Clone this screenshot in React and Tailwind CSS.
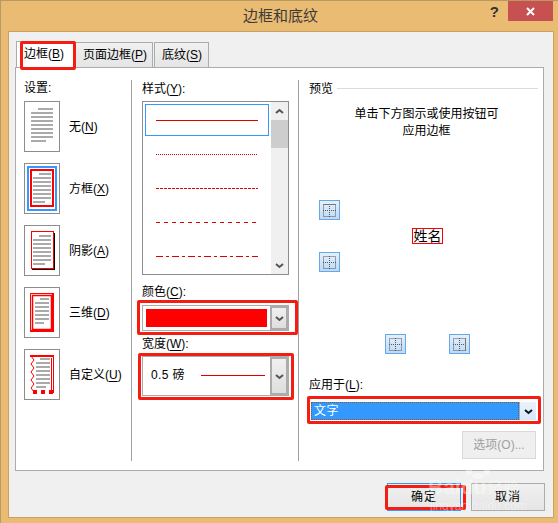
import React from "react";

const FONT = "font-['Liberation_Sans','Noto_Sans_CJK_SC',sans-serif]";

const docLines = (x1, x2, y, lastX2, firstX1, count = 9) => {
  const rows = [];
  for (let i = 0; i < count; i++) {
    const left = i === 0 ? firstX1 : x1;
    const right = i === count - 1 ? lastX2 : x2;
    rows.push(<rect key={i} x={left} y={y + i * 4} width={right - left} height="2" fill="#aaaaaa" />);
  }
  return rows;
};

const SettingNone = () => (
  <svg width="34" height="49" viewBox="0 0 34 49">{docLines(6, 28, 6, 21, 13)}</svg>
);

const SettingBox = () => (
  <svg width="34" height="49" viewBox="0 0 34 49">
    <rect x="3" y="3" width="28" height="43" fill="none" stroke="#3399ff" strokeWidth="2" />
    <rect x="6" y="6" width="22" height="36" fill="none" stroke="#ff0000" strokeWidth="2" />
    {docLines(8, 26, 9, 20, 14, 8)}
  </svg>
);

const SettingShadow = () => (
  <svg width="34" height="49" viewBox="0 0 34 49">
    <rect x="7" y="7" width="23" height="37" fill="#000" />
    <rect x="6.5" y="5.5" width="22" height="37" fill="#fff" stroke="#ff0000" />
    {docLines(8, 26, 9, 20, 14, 8)}
  </svg>
);

const Setting3d = () => (
  <svg width="34" height="49" viewBox="0 0 34 49">
    <rect x="5.5" y="5.5" width="23" height="38" fill="none" stroke="#ff0000" />
    <rect x="7.5" y="7.5" width="19" height="34" fill="none" stroke="#ff0000" strokeWidth="1.5" />
    <rect x="27" y="6" width="2" height="38" fill="#ff0000" />
    <rect x="6" y="42" width="23" height="2" fill="#ff0000" />
    {docLines(10, 24, 10, 19, 15, 7)}
  </svg>
);

const SettingCustom = () => (
  <svg width="34" height="49" viewBox="0 0 34 49">
    <rect x="5" y="5" width="23" height="2" fill="#ff0000" />
    <path d="M6 6 L9 10 L6 14 L9 18 L6 22 L9 26 L6 30 L9 34 L6 38 L9 42" fill="none" stroke="#ff0000" />
    <rect x="28" y="5" width="1" height="38" fill="#ff0000" />
    <rect x="26" y="8" width="1" height="32" fill="#ff0000" />
    <rect x="8" y="40" width="4" height="4" fill="#ff0000" />
    <rect x="16" y="40" width="4" height="4" fill="#ff0000" />
    <rect x="24" y="40" width="4" height="4" fill="#ff0000" />
    {docLines(11, 25, 8, 21, 15, 8)}
  </svg>
);

const settings = [
  { label: "无", key: "N", Icon: SettingNone },
  { label: "方框", key: "X", Icon: SettingBox },
  { label: "阴影", key: "A", Icon: SettingShadow },
  { label: "三维", key: "D", Icon: Setting3d },
  { label: "自定义", key: "U", Icon: SettingCustom },
];

const Hot = ({ children }) => <span className="underline underline-offset-2">{children}</span>;

const Chevron = ({ color = "#555555", up = false }) => (
  <svg width="9" height="7" viewBox="0 0 9 7">
    <path d={up ? "M1 5 L4.5 2 L8 5" : "M1 2 L4.5 5 L8 2"} fill="none" stroke={color} strokeWidth="2" />
  </svg>
);

const lineSamples = ["solid", "dotted", "dashed", "long", "dashdot"];

const LineSample = ({ kind }) => {
  const dash = { solid: "none", dotted: "1 1", dashed: "3 1", long: "4 4", dashdot: "7 3 3 3" }[kind];
  return (
    <svg width="102" height="1" viewBox="0 0 102 1" className="block">
      <line x1="0" y1="0.5" x2="102" y2="0.5" stroke="#e00000" strokeDasharray={dash} />
    </svg>
  );
};

const ComboArrow = ({ className }) => (
  <div className={"flex items-center justify-center bg-gradient-to-b from-[#f0f0f0] to-[#dedede] border-2 border-[#acacac] w-[18px] " + className}>
    <Chevron />
  </div>
);

const BorderToggle = ({ variant }) => (
  <div className="w-[21px] h-[20px] border border-[#66a7e8] bg-gradient-to-b from-[#e4f0fc] to-[#bcdaf7] flex items-center justify-center">
    <svg width="13" height="13" viewBox="0 0 13 13" fill="none" stroke="#555" strokeDasharray="1 1">
      <rect x="0.5" y="0.5" width="12" height="12" />
      <line x1="6.5" y1="0" x2="6.5" y2="13" />
      <line x1="0" y1="6.5" x2="13" y2="6.5" />
      {variant === "top" && <line x1="0" y1="0.5" x2="13" y2="0.5" strokeDasharray="none" stroke="#777" />}
      {variant === "right" && <line x1="12.5" y1="0" x2="12.5" y2="13" strokeDasharray="none" stroke="#777" />}
    </svg>
  </div>
);

const App = () => {
  return (
    <div className={"relative w-[558px] h-[523px] overflow-hidden bg-[#e9bb73] border-l border-t border-[#b89a60] flex flex-col text-[12px] leading-[16px] text-black " + FONT}>
      {/* title bar */}
      <div className="relative h-[30px] flex items-start justify-center shrink-0">
        <div className="text-[15px] leading-[29px] text-[#3a3a3a] pl-[2px]">边框和底纹</div>
        <div className="absolute right-[5px] top-0 flex items-start">
          <div className="text-[15px] font-bold leading-[21px] text-[#333] mr-[9px]">?</div>
          <div className="w-[45px] h-[20px] bg-[#c75050] flex items-center justify-center">
            <svg width="9" height="9" viewBox="0 0 9 9">
              <path d="M1 1 L8 8 M8 1 L1 8" stroke="#fff" strokeWidth="2" />
            </svg>
          </div>
        </div>
      </div>

      {/* client area */}
      <div className="flex-1 ml-[7px] mr-[4px] mb-[5px] border-l border-t border-r border-b border-[#c9a25f] bg-[#f0f0f0] pl-[6px] pr-[5px] flex flex-col">
        {/* tabs */}
        <div className="flex h-[25px] mt-[10px] pl-[1px] relative z-10 items-end">
          <div className="w-[59px] h-[26px] bg-white border-l border-t border-[#acacac] pl-[7px] leading-[24px]">
            边框(<Hot>B</Hot>)
          </div>
          <div className="w-[78px] h-[25px] bg-gradient-to-b from-[#f0f0f0] to-[#e5e5e5] border border-[#acacac] border-b-0 pl-[7px] leading-[24px]">
            页面边框(<Hot>P</Hot>)
          </div>
          <div className="w-[55px] h-[25px] ml-[1px] bg-gradient-to-b from-[#f0f0f0] to-[#e5e5e5] border border-[#acacac] border-b-0 pl-[7px] leading-[24px]">
            底纹(<Hot>S</Hot>)
          </div>
        </div>

        {/* tab panel */}
        <div className="h-[404px] w-[529px] bg-white border border-[#acacac] pt-[12px] flex">
          <div className="w-[115px] h-[381px] pl-[8px]">
            <div className="h-[21px]">设置:</div>
            <div className="flex flex-col gap-[11px]">
              {settings.map(({ label, key, Icon }) => (
                <div key={key} className="flex items-center gap-[9px]">
                  <div className="w-[36px] h-[51px] border border-[#8c8c8c] bg-white">
                    <Icon />
                  </div>
                  <div>
                    {label}(<Hot>{key}</Hot>)
                  </div>
                </div>
              ))}
            </div>
          </div>

          <div className="w-[167px] h-[381px] border-l border-[#a0a0a0] pl-[10px]">
            <div className="h-[21px] pt-[1px]">
              样式(<Hot>Y</Hot>):
            </div>
            <div className="w-[147px] h-[174px] border border-[#8c8c8c] flex">
              <div className="flex-1 pt-[2px] pl-[2px]">
                {lineSamples.map((kind, i) => (
                  <div
                    key={kind}
                    className={
                      "w-[124px] h-[32px] flex items-center justify-center mb-[2px] " +
                      (i === 0 ? "border border-[#3399ff]" : "")
                    }
                  >
                    <LineSample kind={kind} />
                  </div>
                ))}
              </div>
              <div className="w-[17px] bg-[#f0f0f0] flex flex-col items-center">
                <div className="h-[18px] flex items-center"><Chevron up /></div>
                <div className="w-full h-[28px] bg-[#cdcdcd]"></div>
                <div className="flex-1"></div>
                <div className="h-[18px] flex items-center"><Chevron /></div>
              </div>
            </div>

            <div className="h-[21px] mt-[9px]">
              颜色(<Hot>C</Hot>):
            </div>
            <div className="w-[147px] h-[26px] border border-[#acacac] flex">
              <div className="flex-1 p-[3px]">
                <div className="h-full bg-[#ff0000]"></div>
              </div>
              <ComboArrow className="h-full" />
            </div>

            <div className="h-[20px] mt-[5px]">
              宽度(<Hot>W</Hot>):
            </div>
            <div className="w-[147px] h-[40px] border border-[#acacac] flex">
              <div className="flex-1 flex items-center pl-[8px] pb-[2px] text-[12px]">
                <span className="tracking-[0.4px] w-[50px]">0.5 磅</span>
                <svg width="64" height="1" viewBox="0 0 64 1" className="block">
                  <line x1="0" y1="0.5" x2="64" y2="0.5" stroke="#e00000" />
                </svg>
              </div>
              <ComboArrow className="h-full" />
            </div>
          </div>

          <div className="h-[381px] flex-1 border-l border-[#a0a0a0] pl-[10px] pr-[5px] flex flex-col">
            <div className="h-[21px] pt-[1px] flex items-start gap-[4px]">
              <span>预览</span>
              <div className="flex-1 border-t border-[#dcdcdc] mt-[7px]"></div>
            </div>
            <div className="mt-[5px] leading-[17px] text-center pl-[6px]">
              单击下方图示或使用按钮可
              <br />
              应用边框
            </div>

            <div className="flex items-center mt-[60px] ml-[10px]">
              <div className="flex flex-col gap-[32px]">
                <BorderToggle variant="top" />
                <BorderToggle />
              </div>
              <div className="ml-[72px] w-[31px] h-[16px] border border-[#ff0000] text-[14px] leading-[14px] text-center text-black whitespace-nowrap">
                姓名
              </div>
            </div>

            <div className="flex mt-[62px] ml-[76px] gap-[43px]">
              <BorderToggle />
              <BorderToggle variant="right" />
            </div>

            <div className="mt-[23px]">
              应用于(<Hot>L</Hot>):
            </div>
            <div className="mt-[7px] h-[22px] w-[229px] bg-white flex p-[2px]">
              <div className="flex-1 bg-[#3399ff] text-white border border-dotted border-[#8a5a20] pl-[2px] leading-[16px] tracking-[0.5px]">
                文字
              </div>
              <div className="w-[17px] bg-gradient-to-b from-[#eaf3fc] to-[#d5e7f9] flex items-center justify-center border-l border-[#7eb4ea]">
                <Chevron color="#111111" />
              </div>
            </div>
            <div className="self-end mr-[2px] mt-[9px] w-[74px] h-[28px] border border-[#d9d9d9] bg-[#efefef] text-[#a0a0a0] flex items-center justify-center">
              选项(O)...
            </div>
          </div>
        </div>

        {/* footer buttons */}
        <div className="flex justify-end gap-[10px] mt-[12px] pr-[3px]">
          <div className="w-[74px] h-[28px] border border-[#3399ff] bg-gradient-to-b from-[#f0f0f0] to-[#e5e5e5] flex items-center justify-center tracking-[1px]">
            确定
          </div>
          <div className="w-[74px] h-[28px] border border-[#acacac] bg-gradient-to-b from-[#f0f0f0] to-[#e5e5e5] flex items-center justify-center tracking-[1px]">
            取消
          </div>
        </div>
      </div>

      {/* red annotation boxes */}
      <div className="absolute left-[19px] top-[40px] w-[56px] h-[29px] border-[3px] border-[#f51c12] rounded-[2px] z-20"></div>
      <div className="absolute left-[136px] top-[299px] w-[161px] h-[35px] border-[3px] border-[#f51c12] rounded-[2px]"></div>
      <div className="absolute left-[137px] top-[352px] w-[156px] h-[47px] border-[3px] border-[#f51c12] rounded-[2px]"></div>
      <div className="absolute left-[306px] top-[395px] w-[234px] h-[28px] border-[3px] border-[#f51c12] rounded-[2px]"></div>
      <div className="absolute left-[384px] top-[484px] w-[81px] h-[25px] border-[3px] border-[#f51c12] rounded-[2px]"></div>

      {/* watermark */}
      <div className="absolute left-[427px] top-[461px] w-[100px] h-[50px] text-white/40 pointer-events-none">
        <svg className="absolute left-[36px] top-0" width="26" height="17" viewBox="0 0 26 17" fill="currentColor">
          <ellipse cx="5" cy="9" rx="3" ry="4" />
          <ellipse cx="11" cy="4" rx="3" ry="4" />
          <ellipse cx="18" cy="4" rx="3" ry="4" />
          <ellipse cx="23" cy="9" rx="3" ry="4" />
          <ellipse cx="14" cy="14" rx="6" ry="3" />
        </svg>
        <div className="absolute left-0 top-[13px] text-[21px] leading-[24px] font-bold whitespace-nowrap">
          Baidu<span className="text-[16px] font-normal ml-[1px]">经验</span>
        </div>
        <div className="absolute left-[2px] top-[37px] text-[12px] leading-[14px] whitespace-nowrap">jingyan.baidu.com</div>
      </div>
    </div>
  );
};

export default App;
